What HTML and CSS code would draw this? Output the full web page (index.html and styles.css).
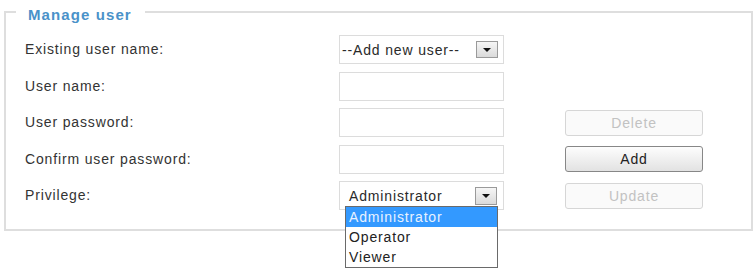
FILE: index.html
```html
<!DOCTYPE html>
<html lang="en">
<head>
  <meta charset="UTF-8" />
  <title>Manage user</title>
  <link rel="stylesheet" href="styles.css">
</head>
<body>
  <div class="manage-user">
    <div class="panel-title">Manage user</div>
    <div class="form-grid">
      <label class="field-label">Existing user name:</label>
      <div class="select-box">
        <span class="select-text">--Add new user--</span>
        <span class="select-arrow"></span>
      </div>
      <div></div>

      <label class="field-label">User name:</label>
      <input class="text-box" type="text">
      <div></div>

      <label class="field-label">User password:</label>
      <input class="text-box" type="password">
      <button class="btn" disabled>Delete</button>

      <label class="field-label">Confirm user password:</label>
      <input class="text-box" type="password">
      <button class="btn">Add</button>

      <label class="field-label">Privilege:</label>
      <div class="select-box privilege">
        <div class="select-inner">
          <span class="select-text">Administrator</span>
          <span class="select-arrow"></span>
        </div>
        <ul class="option-list">
          <li class="selected">Administrator</li>
          <li>Operator</li>
          <li>Viewer</li>
        </ul>
      </div>
      <button class="btn" disabled>Update</button>
    </div>
  </div>
</body>
</html>
```

FILE: styles.css
```css
html, body { height: 100%; }
body { margin: 0; min-height: 268px; background: #fff; font-family: "Liberation Sans", Arial, sans-serif; font-size: 14px; letter-spacing: 0.85px; color: #333; }
.manage-user { margin: 11px 3px 0 4px; padding: 0 0 19px 10px; border: 2px solid #dedede; }
.panel-title { width: fit-content; margin-top: -6px; padding: 0 13px 0 12px; background: #fff; font-size: 15px; line-height: 15px; font-weight: bold; letter-spacing: 1.1px; color: #4a92c9; }
.form-grid { display: grid; grid-template-columns: 314px 226px 138px; grid-auto-rows: 29px; row-gap: 7.5px; margin-top: 13px; padding-left: 9px; align-items: center; }
.field-label { line-height: 29px; }
.text-box { box-sizing: border-box; width: 165px; height: 29px; margin: 0; border: 1px solid #dcdcdc; background: #fff; }
.select-box { box-sizing: border-box; width: 165px; height: 29px; border: 1px solid #dcdcdc; display: flex; align-items: center; padding: 0 5px 0 2px; position: relative; }
.select-text { flex: 1; white-space: nowrap; color: #2a2a2a; }
.select-arrow { box-sizing: border-box; width: 22px; height: 17px; border: 1px solid #9a9a9a; background: linear-gradient(#f6f6f6, #dadada); position: relative; }
.select-arrow::after { content: ""; position: absolute; left: 6px; top: 6px; border-left: 4px solid transparent; border-right: 4px solid transparent; border-top: 4px solid #111; }
.privilege { padding: 0 5px; }
.select-inner { flex: 1; display: flex; align-items: center; padding-left: 4px; padding-right: 1px; height: 23px; }
.privilege .select-arrow { height: 18px; }
.option-list { position: absolute; top: 24px; left: 5px; width: 153px; box-sizing: border-box; margin: 0; padding: 0; list-style: none; border: 1px solid #6a6a6a; background: #fff; z-index: 2; }
.option-list li { height: 20px; line-height: 20px; padding-left: 3px; color: #222; }
.option-list li.selected { background: #3399ff; color: #e8f2ff; }
.btn { box-sizing: border-box; width: 138px; height: 26px; font-family: inherit; font-size: 14px; letter-spacing: 0.85px; border-radius: 3px; border: 1px solid #878787; background: linear-gradient(#fdfdfd, #e2e2e2); color: #222; padding: 0; }
.btn:disabled { border-color: #d6d6d6; background: #fafafa; color: #c2c2c2; }
```
